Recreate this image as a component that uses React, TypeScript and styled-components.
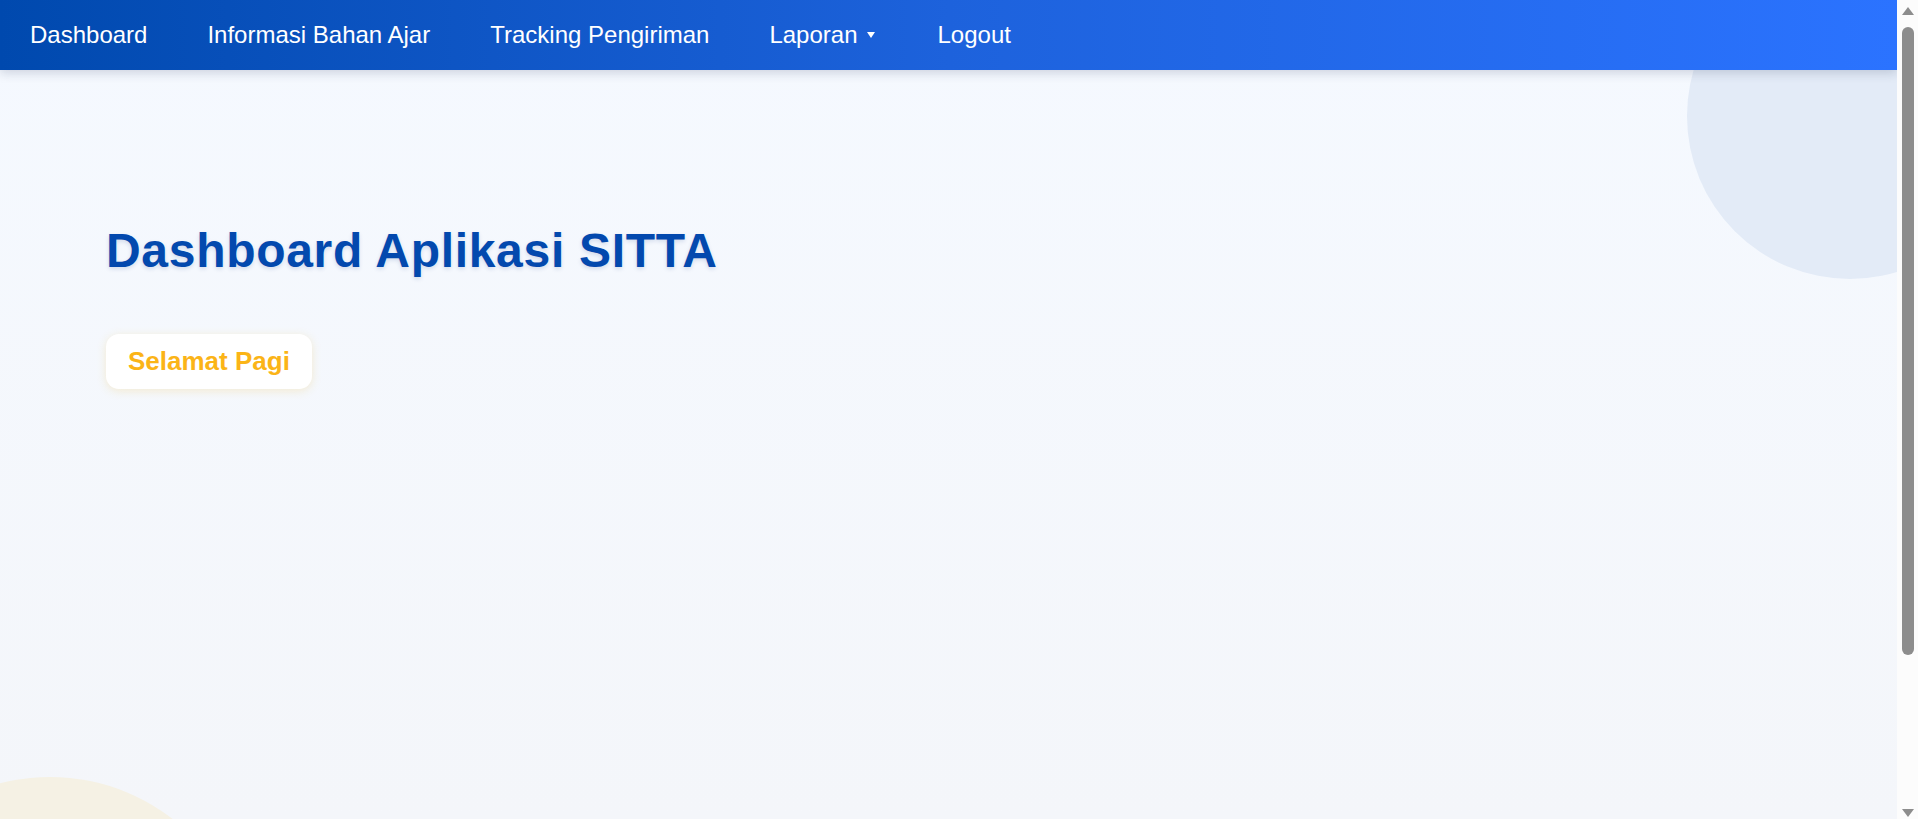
import React from "react";
import styled, { createGlobalStyle } from "styled-components";

const GlobalStyle = createGlobalStyle`
  html, body {
    margin: 0;
    padding: 0;
    overflow: hidden;
  }
  body {
    font-family: "Liberation Sans", Arial, sans-serif;
    background: #f4f6fa;
  }
  * { box-sizing: border-box; }
`;

const Shell = styled.div`
  display: flex;
  height: 100vh;
  overflow: hidden;
`;

const Page = styled.div`
  position: relative;
  flex: 1;
  min-width: 0;
  overflow: hidden;
  background: linear-gradient(180deg, #f5f9ff 0%, #f4f6fa 100%);
`;

const ScrollTrack = styled.div`
  width: 21px;
  flex-shrink: 0;
  display: flex;
  flex-direction: column;
  align-items: center;
  padding: 7px 0 2px;
  background: #fcfcfc;
`;

const ArrowUp = styled.span`
  width: 0;
  height: 0;
  border-left: 6px solid transparent;
  border-right: 6px solid transparent;
  border-bottom: 8px solid #8d8d8d;
`;

const ArrowDown = styled.span`
  margin-top: auto;
  width: 0;
  height: 0;
  border-left: 6px solid transparent;
  border-right: 6px solid transparent;
  border-top: 8px solid #8d8d8d;
`;

const Thumb = styled.div`
  margin-top: 12px;
  width: 12px;
  height: 628px;
  border-radius: 6px;
  background: #8d8d8d;
`;

const Circle = styled.div<{ $size: number; $color: string }>`
  position: absolute;
  width: ${(p) => p.$size}px;
  height: ${(p) => p.$size}px;
  border-radius: 50%;
  background: ${(p) => p.$color};
  z-index: 0;
`;

const TopCircle = styled(Circle)`
  top: -47px;
  right: -116px;
`;

const BottomCircle = styled(Circle)`
  top: 777px;
  left: -150px;
`;

const NavBar = styled.nav`
  position: relative;
  z-index: 2;
  height: 70px;
  display: flex;
  align-items: center;
  gap: 60px;
  padding-left: 30px;
  background: linear-gradient(90deg, #0049ae 0%, #1d62dc 50%, #2b73ff 100%);
  box-shadow: 0 3px 10px rgba(20, 40, 80, 0.18);
`;

const NavLink = styled.a`
  display: flex;
  align-items: center;
  color: #ffffff;
  font-size: 24px;
  text-decoration: none;
  cursor: pointer;
  white-space: nowrap;
`;

const Caret = styled.span`
  display: inline-block;
  margin: 0 3px 0 9px;
  width: 0;
  height: 0;
  border-left: 4.5px solid transparent;
  border-right: 4.5px solid transparent;
  border-top: 6px solid #ffffff;
`;

const Main = styled.main`
  position: relative;
  z-index: 1;
  padding: 153px 0 0 106px;
  display: flex;
  flex-direction: column;
  align-items: flex-start;
  gap: 56px;
`;

const Title = styled.h1`
  margin: 0;
  font-size: 48px;
  font-weight: 700;
  color: #0349ae;
  letter-spacing: 0.7px;
  text-shadow: 0 2px 4px rgba(0, 50, 130, 0.14);
`;

const Greeting = styled.div`
  background: #ffffff;
  border-radius: 13px;
  padding: 12px 22px;
  font-size: 26px;
  font-weight: 700;
  color: #fbb417;
  box-shadow: 0 2px 10px rgba(240, 190, 60, 0.22);
`;

export default function App() {
  return (
    <>
      <GlobalStyle />
      <Shell>
        <Page>
          <TopCircle $size={326} $color="#e3ebf7" />
          <BottomCircle $size={400} $color="#f5f1e4" />
          <NavBar>
            <NavLink>Dashboard</NavLink>
            <NavLink>Informasi Bahan Ajar</NavLink>
            <NavLink>Tracking Pengiriman</NavLink>
            <NavLink>
              Laporan
              <Caret />
            </NavLink>
            <NavLink>Logout</NavLink>
          </NavBar>
          <Main>
            <Title>Dashboard Aplikasi SITTA</Title>
            <Greeting>Selamat Pagi</Greeting>
          </Main>
        </Page>
        <ScrollTrack>
          <ArrowUp />
          <Thumb />
          <ArrowDown />
        </ScrollTrack>
      </Shell>
    </>
  );
}
